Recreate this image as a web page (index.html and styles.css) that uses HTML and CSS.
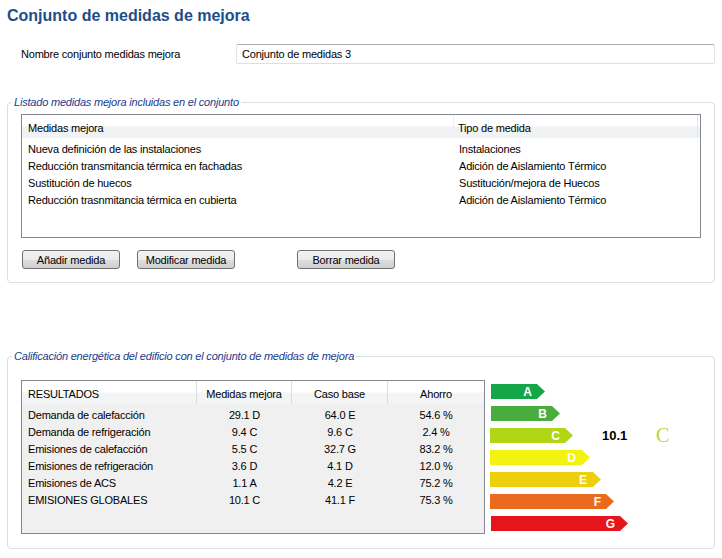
FILE: index.html
```html
<!DOCTYPE html>
<html lang="es">
<head>
<meta charset="utf-8">
<title>Conjunto de medidas de mejora</title>
<link rel="stylesheet" href="styles.css">
</head>
<body>
<div class="page">
  <h1 class="title">Conjunto de medidas de mejora</h1>

  <div class="name-row">
    <span class="name-label">Nombre conjunto medidas mejora</span>
    <div class="name-input">Conjunto de medidas 3</div>
  </div>

  <fieldset class="group group-list">
    <legend>Listado medidas mejora incluidas en el conjunto</legend>
    <div class="listbox">
      <div class="lv-header">
        <div class="lv-c1 lv-hcell">Medidas mejora</div>
        <div class="lv-c2 lv-hcell">Tipo de medida</div>
        <div class="lv-c3"></div>
      </div>
      <div class="lv-body">
        <div class="lv-row"><span class="lv-c1">Nueva definición de las instalaciones</span><span class="lv-c2">Instalaciones</span></div>
        <div class="lv-row"><span class="lv-c1">Reducción transmitancia térmica en fachadas</span><span class="lv-c2">Adición de Aislamiento Térmico</span></div>
        <div class="lv-row"><span class="lv-c1">Sustitución de huecos</span><span class="lv-c2">Sustitución/mejora de Huecos</span></div>
        <div class="lv-row"><span class="lv-c1">Reducción trasnmitancia térmica en cubierta</span><span class="lv-c2">Adición de Aislamiento Térmico</span></div>
      </div>
    </div>
    <div class="buttons">
      <button class="btn">Añadir medida</button>
      <button class="btn">Modificar medida</button>
      <button class="btn btn-far">Borrar medida</button>
    </div>
  </fieldset>

  <fieldset class="group group-results">
    <legend>Calificación energética del edificio con el conjunto de medidas de mejora</legend>
    <div class="results-wrap">
      <div class="results">
        <div class="rs-header">
          <div class="rs-c1 rs-hcell">RESULTADOS</div>
          <div class="rs-c2 rs-hcell">Medidas mejora</div>
          <div class="rs-c3 rs-hcell">Caso base</div>
          <div class="rs-c4 rs-hcell">Ahorro</div>
        </div>
        <div class="rs-body">
          <div class="rs-row"><span class="rs-c1">Demanda de calefacción</span><span class="rs-c2">29.1 D</span><span class="rs-c3">64.0 E</span><span class="rs-c4">54.6 %</span></div>
          <div class="rs-row"><span class="rs-c1">Demanda de refrigeración</span><span class="rs-c2">9.4 C</span><span class="rs-c3">9.6 C</span><span class="rs-c4">2.4 %</span></div>
          <div class="rs-row"><span class="rs-c1">Emisiones de calefacción</span><span class="rs-c2">5.5 C</span><span class="rs-c3">32.7 G</span><span class="rs-c4">83.2 %</span></div>
          <div class="rs-row"><span class="rs-c1">Emisiones de refrigeración</span><span class="rs-c2">3.6 D</span><span class="rs-c3">4.1 D</span><span class="rs-c4">12.0 %</span></div>
          <div class="rs-row"><span class="rs-c1">Emisiones de ACS</span><span class="rs-c2">1.1 A</span><span class="rs-c3">4.2 E</span><span class="rs-c4">75.2 %</span></div>
          <div class="rs-row"><span class="rs-c1">EMISIONES GLOBALES</span><span class="rs-c2">10.1 C</span><span class="rs-c3">41.1 F</span><span class="rs-c4">75.3 %</span></div>
        </div>
      </div>

      <div class="scale">
        <div class="bar-row">
          <svg class="bar bar-shift" width="54" height="15" viewBox="0 0 54 15"><polygon class="bar-a" points="0,0 46,0 54,7.5 46,15 0,15"/><text x="41" y="12">A</text></svg>
        </div>
        <div class="bar-row">
          <svg class="bar bar-shift" width="69" height="15" viewBox="0 0 69 15"><polygon class="bar-b" points="0,0 61,0 69,7.5 61,15 0,15"/><text x="56" y="12">B</text></svg>
        </div>
        <div class="bar-row">
          <svg class="bar" width="83" height="15" viewBox="0 0 83 15"><polygon class="bar-c" points="0,0 75,0 83,7.5 75,15 0,15"/><text x="70" y="12">C</text></svg>
          <span class="rating-value">10.1</span>
          <span class="rating-letter">C</span>
        </div>
        <div class="bar-row">
          <svg class="bar" width="100" height="15" viewBox="0 0 100 15"><polygon class="bar-d" points="0,0 92,0 100,7.5 92,15 0,15"/><text x="86" y="12">D</text></svg>
        </div>
        <div class="bar-row">
          <svg class="bar" width="111" height="15" viewBox="0 0 111 15"><polygon class="bar-e" points="0,0 103,0 111,7.5 103,15 0,15"/><text x="97" y="12">E</text></svg>
        </div>
        <div class="bar-row">
          <svg class="bar" width="124" height="15" viewBox="0 0 124 15"><polygon class="bar-f" points="0,0 116,0 124,7.5 116,15 0,15"/><text x="111" y="12">F</text></svg>
        </div>
        <div class="bar-row">
          <svg class="bar bar-shift" width="137" height="15" viewBox="0 0 137 15"><polygon class="bar-g" points="0,0 129,0 137,7.5 129,15 0,15"/><text x="124" y="12">G</text></svg>
        </div>
      </div>
    </div>
  </fieldset>
</div>
</body>
</html>
```

FILE: styles.css
```css
html, body {
  margin: 0;
  padding: 0;
  background: #ffffff;
}

body {
  font-family: "Liberation Sans", Arial, sans-serif;
  font-size: 11px;
  color: #000000;
}

.page {
  width: 708px;
  padding: 0 7px;
}

.title {
  margin: 0;
  padding-top: 6px;
  font-size: 16px;
  line-height: 20px;
  font-weight: bold;
  color: #1d4e89;
}

/* name row */
.name-row {
  display: flex;
  align-items: center;
  height: 20px;
  margin-top: 18px;
}

.name-label {
  box-sizing: border-box;
  flex: 0 0 229px;
  padding-left: 14px;
  letter-spacing: -0.2px;
}

.name-input {
  box-sizing: border-box;
  flex: 1;
  height: 20px;
  line-height: 18px;
  padding-left: 5px;
  border: 1px solid #dbdfe6;
  border-top-color: #abadb3;
  border-left-color: #e2e3ea;
  border-right-color: #e2e3ea;
  border-radius: 2px;
  letter-spacing: -0.2px;
}

/* group boxes */
.group {
  margin: 0;
  min-width: 0;
  border: 1px solid #d5dfe5;
  border-radius: 4px;
  padding: 5px 13px 13px;
}

.group legend {
  padding: 0 2px;
  margin-left: -9px;
  line-height: 14px;
  font-style: italic;
  color: #1b3a8c;
  letter-spacing: -0.2px;
}

.group-list {
  margin-top: 31px;
}

.group-results {
  margin-top: 66px;
  padding-top: 17px;
  padding-bottom: 14px;
}

/* list view */
.listbox {
  box-sizing: border-box;
  height: 124px;
  border: 1px solid #828790;
  background: #ffffff;
  letter-spacing: -0.2px;
}

.lv-header {
  display: flex;
  height: 23px;
  background: linear-gradient(#ffffff 0%, #ffffff 48%, #f1f2f4 52%, #f1f2f4 100%);
}

.lv-hcell {
  box-sizing: border-box;
  padding-top: 3px;
  line-height: 20px;
}

.lv-c1 {
  box-sizing: border-box;
  flex: 0 0 432px;
  padding-left: 6px;
}

.lv-hcell.lv-c1 {
  border-right: 1px solid #eceef0;
}

.lv-c2 {
  box-sizing: border-box;
  flex: 0 0 244px;
  padding-left: 4px;
}

.lv-hcell.lv-c2 {
  border-right: 1px solid #e3e5e8;
}

.lv-c3 {
  flex: 1;
}

.lv-body {
  padding-top: 3px;
}

.lv-row {
  display: flex;
  height: 17px;
  line-height: 17px;
}

.lv-row .lv-c1 {
  padding-left: 6px;
}

.lv-row .lv-c2 {
  padding-left: 5px;
}

/* buttons */
.buttons {
  display: flex;
  gap: 17px;
  margin-top: 12px;
  padding-left: 1px;
}

.btn {
  box-sizing: border-box;
  width: 98px;
  height: 19px;
  padding: 0;
  border: 1px solid #707070;
  border-radius: 3px;
  background: linear-gradient(#f2f2f2 0%, #ebebeb 50%, #dddddd 51%, #cfcfcf 100%);
  font-family: "Liberation Sans", Arial, sans-serif;
  font-size: 11px;
  color: #000000;
  letter-spacing: -0.2px;
}

.btn-far {
  margin-left: 45px;
}

/* results */
.results-wrap {
  display: flex;
  align-items: flex-start;
}

.results {
  box-sizing: border-box;
  flex: 0 0 464px;
  height: 154px;
  border: 1px solid #828790;
  background: #f0f0f0;
  letter-spacing: -0.2px;
}

.rs-header {
  display: flex;
  height: 23px;
  background: linear-gradient(#ffffff 0%, #ffffff 48%, #f3f4f6 52%, #f3f4f6 100%);
}

.rs-hcell {
  box-sizing: border-box;
  padding-top: 3px;
  line-height: 20px;
}

.rs-c1 {
  box-sizing: border-box;
  flex: 0 0 175px;
  padding-left: 6px;
}

.rs-c2 {
  box-sizing: border-box;
  flex: 0 0 95px;
  text-align: center;
}

.rs-c3 {
  box-sizing: border-box;
  flex: 0 0 96px;
  text-align: center;
}

.rs-c4 {
  box-sizing: border-box;
  flex: 0 0 96px;
  text-align: center;
}

.rs-hcell.rs-c1,
.rs-hcell.rs-c2,
.rs-hcell.rs-c3 {
  border-right: 1px solid #dcdde0;
}

.rs-body {
  padding-top: 3px;
}

.rs-row {
  display: flex;
  height: 17px;
  line-height: 17px;
}

/* energy scale */
.scale {
  display: flex;
  flex-direction: column;
  gap: 7px;
  margin-left: 5px;
  padding-top: 4px;
}

.bar-row {
  display: grid;
  grid-template-columns: 112px 54px auto;
  align-items: center;
  height: 15px;
}

.bar {
  display: block;
}

.bar-shift {
  margin-left: 1px;
}

.bar text {
  font-family: "Liberation Sans", Arial, sans-serif;
  font-size: 12px;
  font-weight: bold;
  fill: #ffffff;
  text-anchor: end;
}

.bar-a { fill: #16a64a; }
.bar-b { fill: #48ac3e; }
.bar-c { fill: #b0d616; }
.bar-d { fill: #f4f310; }
.bar-e { fill: #eecf0b; }
.bar-f { fill: #ea6b1d; }
.bar-g { fill: #e6151b; }

.rating-value {
  font-size: 13px;
  font-weight: bold;
  color: #000000;
}

.rating-letter {
  font-family: "Liberation Serif", "Times New Roman", serif;
  font-size: 20px;
  line-height: 15px;
  color: #bcd534;
}
```
